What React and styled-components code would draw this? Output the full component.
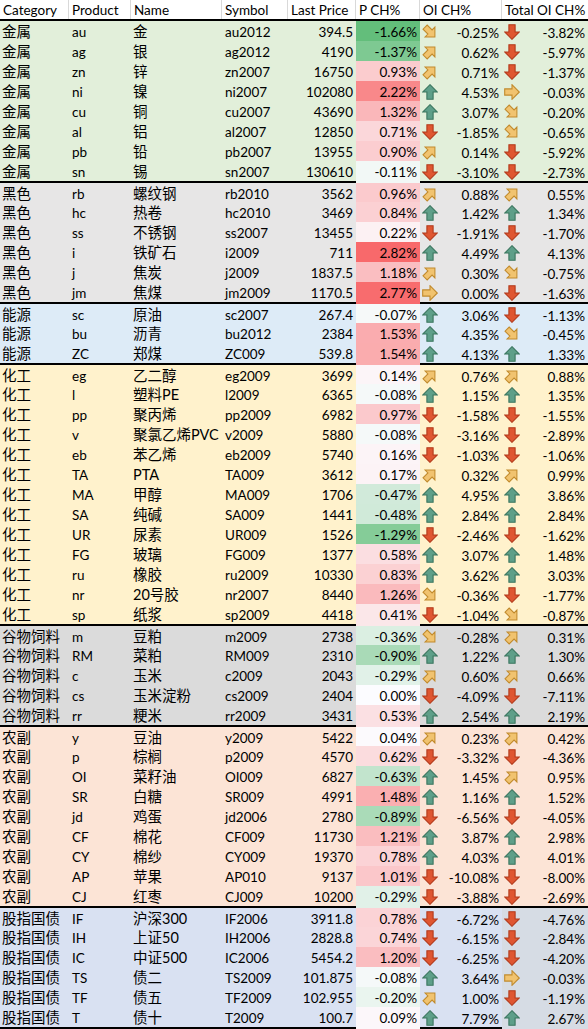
import React from 'react';
import styled, { createGlobalStyle } from 'styled-components';

const groups = [
    {
        bg: '#e2efda',
        rows: [
            ['金属', 'au', '金', 'au2012', '394.5', -1.66, -0.25, -3.82],
            ['金属', 'ag', '银', 'ag2012', '4190', -1.37, 0.62, -5.97],
            ['金属', 'zn', '锌', 'zn2007', '16750', 0.93, 0.71, -1.37],
            ['金属', 'ni', '镍', 'ni2007', '102080', 2.22, 4.53, -0.03],
            ['金属', 'cu', '铜', 'cu2007', '43690', 1.32, 3.07, -0.2],
            ['金属', 'al', '铝', 'al2007', '12850', 0.71, -1.85, -0.65],
            ['金属', 'pb', '铅', 'pb2007', '13955', 0.9, 0.14, -5.92],
            ['金属', 'sn', '锡', 'sn2007', '130610', -0.11, -3.1, -2.73],
        ],
    },
    {
        bg: '#e7e6e6',
        rows: [
            ['黑色', 'rb', '螺纹钢', 'rb2010', '3562', 0.96, 0.88, 0.55],
            ['黑色', 'hc', '热卷', 'hc2010', '3469', 0.84, 1.42, 1.34],
            ['黑色', 'ss', '不锈钢', 'ss2007', '13455', 0.22, -1.91, -1.7],
            ['黑色', 'i', '铁矿石', 'i2009', '711', 2.82, 4.49, 4.13],
            ['黑色', 'j', '焦炭', 'j2009', '1837.5', 1.18, 0.3, -0.75],
            ['黑色', 'jm', '焦煤', 'jm2009', '1170.5', 2.77, 0.0, -1.63],
        ],
    },
    {
        bg: '#ddebf7',
        rows: [
            ['能源', 'sc', '原油', 'sc2007', '267.4', -0.07, 3.06, -1.13],
            ['能源', 'bu', '沥青', 'bu2012', '2384', 1.53, 4.35, -0.45],
            ['能源', 'ZC', '郑煤', 'ZC009', '539.8', 1.54, 4.13, 1.33],
        ],
    },
    {
        bg: '#fff2cc',
        rows: [
            ['化工', 'eg', '乙二醇', 'eg2009', '3699', 0.14, 0.76, 0.88],
            ['化工', 'l', '塑料PE', 'l2009', '6365', -0.08, 1.15, 1.35],
            ['化工', 'pp', '聚丙烯', 'pp2009', '6982', 0.97, -1.58, -1.55],
            ['化工', 'v', '聚氯乙烯PVC', 'v2009', '5880', -0.08, -3.16, -2.89],
            ['化工', 'eb', '苯乙烯', 'eb2009', '5740', 0.16, -1.03, -1.06],
            ['化工', 'TA', 'PTA', 'TA009', '3612', 0.17, 0.32, 0.99],
            ['化工', 'MA', '甲醇', 'MA009', '1706', -0.47, 4.95, 3.86],
            ['化工', 'SA', '纯碱', 'SA009', '1441', -0.48, 2.84, 2.84],
            ['化工', 'UR', '尿素', 'UR009', '1526', -1.29, -2.46, -1.62],
            ['化工', 'FG', '玻璃', 'FG009', '1377', 0.58, 3.07, 1.48],
            ['化工', 'ru', '橡胶', 'ru2009', '10330', 0.83, 3.62, 3.03],
            ['化工', 'nr', '20号胶', 'nr2007', '8440', 1.26, -0.36, -1.77],
            ['化工', 'sp', '纸浆', 'sp2009', '4418', 0.41, -1.04, -0.87],
        ],
    },
    {
        bg: '#dbdbdb',
        rows: [
            ['谷物饲料', 'm', '豆粕', 'm2009', '2738', -0.36, -0.28, 0.31],
            ['谷物饲料', 'RM', '菜粕', 'RM009', '2310', -0.9, 1.22, 1.3],
            ['谷物饲料', 'c', '玉米', 'c2009', '2043', -0.29, 0.6, 0.66],
            ['谷物饲料', 'cs', '玉米淀粉', 'cs2009', '2404', 0.0, -4.09, -7.11],
            ['谷物饲料', 'rr', '粳米', 'rr2009', '3431', 0.53, 2.54, 2.19],
        ],
    },
    {
        bg: '#fce4d6',
        rows: [
            ['农副', 'y', '豆油', 'y2009', '5422', 0.04, 0.23, 0.42],
            ['农副', 'p', '棕榈', 'p2009', '4570', 0.62, -3.32, -4.36],
            ['农副', 'OI', '菜籽油', 'OI009', '6827', -0.63, 1.45, 0.95],
            ['农副', 'SR', '白糖', 'SR009', '4991', 1.48, 1.16, 1.52],
            ['农副', 'jd', '鸡蛋', 'jd2006', '2780', -0.89, -6.56, -4.05],
            ['农副', 'CF', '棉花', 'CF009', '11730', 1.21, 3.87, 2.98],
            ['农副', 'CY', '棉纱', 'CY009', '19370', 0.78, 4.03, 4.01],
            ['农副', 'AP', '苹果', 'AP010', '9137', 1.01, -10.08, -8.0],
            ['农副', 'CJ', '红枣', 'CJ009', '10200', -0.29, -3.88, -2.69],
        ],
    },
    {
        bg: '#d9e1f2',
        lastBg: '#d6dce4',
        rows: [
            ['股指国债', 'IF', '沪深300', 'IF2006', '3911.8', 0.78, -6.72, -4.76],
            ['股指国债', 'IH', '上证50', 'IH2006', '2828.8', 0.74, -6.15, -2.84],
            ['股指国债', 'IC', '中证500', 'IC2006', '5454.2', 1.2, -6.25, -4.2],
            ['股指国债', 'TS', '债二', 'TS2009', '101.875', -0.08, 3.64, -0.03],
            ['股指国债', 'TF', '债五', 'TF2009', '102.955', -0.2, 1.0, -1.19],
            ['股指国债', 'T', '债十', 'T2009', '100.7', 0.09, 7.79, 2.67],
        ],
    },
];

const COLS = '69px 62px 91px 66px 68px 64px 82px 86px';

const pct = v => v.toFixed(2) + '%';

// 3-colour scale: green at the low end, white at zero, red at the top
const mix = (a, b, t) => a.map((x, i) => Math.round(x + (b[i] - x) * t));
const heat = v => {
    const white = [252, 252, 255];
    const c = v < 0
        ? mix(white, [99, 190, 123], Math.min(1, v / -1.66))
        : mix(white, [248, 105, 107], Math.min(1, v / 2.82));
    return `rgb(${c.join(',')})`;
};

const arrowKind = v => {
    if (v > 1) return 'up';
    if (v > 0.05) return 'upright';
    if (v >= -0.05) return 'right';
    if (v >= -1) return 'downright';
    return 'down';
};

const arrowStyle = {
    up: { fill: '#5e9f89', stroke: '#3b765f', rot: 0 },
    upright: { fill: '#f1c36f', stroke: '#c18a2c', rot: 45 },
    right: { fill: '#f1c36f', stroke: '#c18a2c', rot: 90 },
    downright: { fill: '#f1c36f', stroke: '#c18a2c', rot: 135 },
    down: { fill: '#df5631', stroke: '#b33a1b', rot: 180 },
};

function Arrow({ kind }) {
    const s = arrowStyle[kind];
    const diag = s.rot % 90 !== 0;
    return (
        <ArrowSvg viewBox="0 0 16 16">
            <g transform={`rotate(${s.rot} 8 8)${diag ? ' translate(8 8) scale(0.95) translate(-8 -8)' : ''}`}>
                <polygon
                    points="8,0.7 15.3,8 11.1,8 11.1,15.3 4.9,15.3 4.9,8 0.7,8"
                    fill={s.fill}
                    stroke={s.stroke}
                    strokeWidth="1.1"
                    strokeLinejoin="miter"
                />
            </g>
        </ArrowSvg>
    );
}

export default function App() {
    return (
        <>
            <GlobalStyle />
            <Sheet>
                <HeaderRow>
                    <HeaderCell>Category</HeaderCell>
                    <HeaderCell>Product</HeaderCell>
                    <HeaderCell>Name</HeaderCell>
                    <HeaderCell>Symbol</HeaderCell>
                    <HeaderCell>Last Price</HeaderCell>
                    <HeaderCell>P CH%</HeaderCell>
                    <HeaderCell>OI CH%</HeaderCell>
                    <HeaderCell $last>Total OI CH%</HeaderCell>
                </HeaderRow>

                {groups.map((g, gi) => (
                    <Group key={gi} $first={gi === 0}>
                        {g.rows.map((r, ri) => (
                            <Row key={r[1]} $bg={g.bg} $short={gi > 0 && ri === 0}>
                                <CjkCell>{r[0]}</CjkCell>
                                <Cell>{r[1]}</Cell>
                                <CjkCell>{r[2]}</CjkCell>
                                <Cell>{r[3]}</Cell>
                                <NumCell>{r[4]}</NumCell>
                                <NumCell $bg={heat(r[5])}>{pct(r[5])}</NumCell>
                                <IconCell>
                                    <Arrow kind={arrowKind(r[6])} />
                                    <span>{pct(r[6])}</span>
                                </IconCell>
                                <IconCell $bg={g.lastBg}>
                                    <Arrow kind={arrowKind(r[7])} />
                                    <span>{pct(r[7])}</span>
                                </IconCell>
                            </Row>
                        ))}
                    </Group>
                ))}
            </Sheet>
        </>
    );
}

const GlobalStyle = createGlobalStyle`
    html, body {
        margin: 0;
        padding: 0;
        background: #ffffff;
    }
    body {
        font-family: Lato, "Noto Sans CJK SC", sans-serif;
        color: #000;
    }
`;

const Sheet = styled.div`
    width: 588px;
    border-bottom: 2px solid #000;
`;

const HeaderRow = styled.div`
    display: grid;
    grid-template-columns: ${COLS};
    height: 19px;
    border-bottom: 2px solid #000;
    background: #fff;
`;

const HeaderCell = styled.div`
    padding: 1px 3px 0;
    font-size: 13.5px;
    line-height: 18px;
    white-space: nowrap;
    overflow: hidden;
    border-right: ${p => (p.$last ? 'none' : '1px solid #d9d9d9')};
`;

const Group = styled.div`
    border-top: ${p => (p.$first ? 'none' : '2px solid #000')};
`;

const Row = styled.div`
    display: grid;
    grid-template-columns: ${COLS};
    height: ${p => (p.$short ? '19px' : '20px')};
    background: ${p => p.$bg};
    font-size: 13.5px;
    line-height: 20px;
`;

const Cell = styled.div`
    padding: 1px 3px 0;
    white-space: nowrap;
    overflow: hidden;
`;

const CjkCell = styled(Cell)`
    font-size: 14.5px;
    padding-left: 2px;
`;

const NumCell = styled(Cell)`
    text-align: right;
    background: ${p => p.$bg || 'transparent'};
`;

const IconCell = styled.div`
    display: flex;
    align-items: center;
    justify-content: space-between;
    padding: 0 3px 0 2px;
    white-space: nowrap;
    background: ${p => p.$bg || 'transparent'};

    span {
        padding-top: 2px;
    }
`;

const ArrowSvg = styled.svg`
    width: 16px;
    height: 16px;
    flex: none;
    display: block;
`;
